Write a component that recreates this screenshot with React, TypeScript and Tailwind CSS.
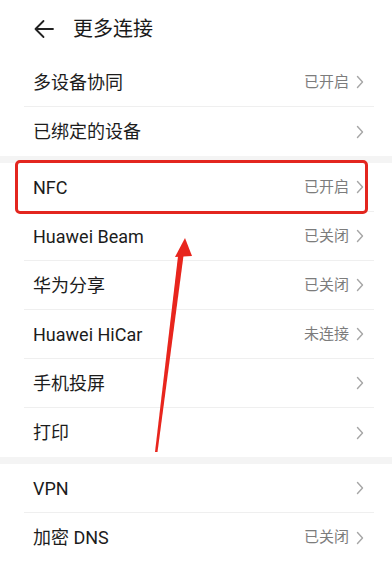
type Row = { label: string; value?: string };

const groupA: Row[] = [
  { label: "多设备协同", value: "已开启" },
  { label: "已绑定的设备" },
];

const groupB: Row[] = [
  { label: "NFC", value: "已开启" },
  { label: "Huawei Beam", value: "已关闭" },
  { label: "华为分享", value: "已关闭" },
  { label: "Huawei HiCar", value: "未连接" },
  { label: "手机投屏" },
  { label: "打印" },
];

const groupC: Row[] = [
  { label: "VPN" },
  { label: "加密 DNS", value: "已关闭" },
];

function Chevron() {
  return (
    <svg width="8" height="14" viewBox="0 0 8 14" className="shrink-0">
      <path d="M1.5 1.5L6.5 7L1.5 12.5" fill="none" stroke="#a6a6a6" strokeWidth="1.4" strokeLinecap="round" strokeLinejoin="round" />
    </svg>
  );
}

function Item({ row, last }: { row: Row; last: boolean }) {
  return (
    <div>
      <div className={`flex items-center pl-[33px] pr-[28px] ${last ? "h-[49px]" : "h-[48px]"}`}>
        <span className="flex-1 text-[18px] text-[#1c1c1c]">{row.label}</span>
        {row.value && (
          <span className="mr-[7px] text-[15px] text-[#7c7c7c]">{row.value}</span>
        )}
        <Chevron />
      </div>
      {!last && <div className="ml-6 mr-[18px] h-px bg-[#efefef]" />}
    </div>
  );
}

function Group({ rows }: { rows: Row[] }) {
  return (
    <div className="bg-white">
      {rows.map((r, i) => (
        <Item key={r.label} row={r} last={i === rows.length - 1} />
      ))}
    </div>
  );
}

export default function App() {
  return (
    <div
      className="relative h-[576px] w-[392px] overflow-hidden bg-white"
      style={{ fontFamily: 'Roboto, "Noto Sans CJK SC", sans-serif' }}
    >
      <div className="flex h-[58px] items-center pl-[34px]">
        <svg width="20" height="20" viewBox="0 0 20 20" className="mr-[19px]">
          <path d="M19 10H1.5M9.5 2L1.5 10L9.5 18" fill="none" stroke="#222" strokeWidth="1.8" strokeLinecap="round" strokeLinejoin="round" />
        </svg>
        <span className="text-[20px] text-[#1a1a1a]">更多连接</span>
      </div>
      <Group rows={groupA} />
      <div className="h-[7px] bg-[#f4f4f4]" />
      <Group rows={groupB} />
      <div className="h-[7px] bg-[#f4f4f4]" />
      <Group rows={groupC} />

      {/* highlight box */}
      <div className="absolute left-[15px] top-[160px] h-[54px] w-[353px] rounded-[5px] border-[3px] border-[#e3261f]" />
      {/* arrow */}
      <svg className="absolute left-0 top-0" width="392" height="576" viewBox="0 0 392 576">
        <polygon points="155,452 157.5,452 184,252 178.5,252" fill="#e8251d" />
        <polygon points="185,238 175,257 192,256" fill="#e8251d" />
      </svg>
    </div>
  );
}
